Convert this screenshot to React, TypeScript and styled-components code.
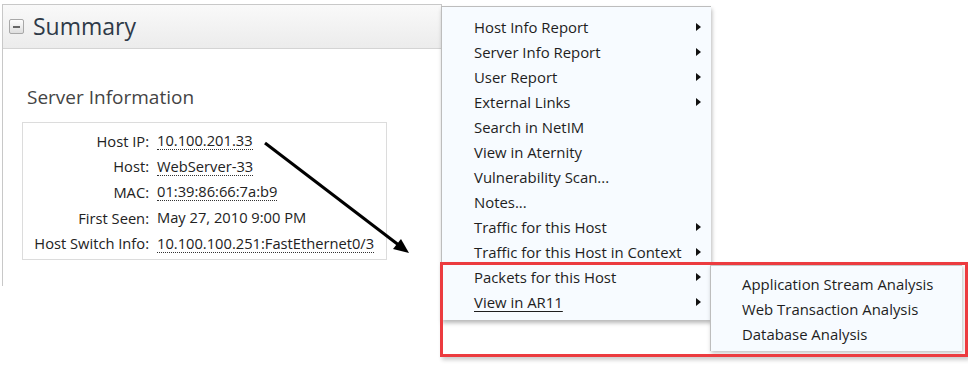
import * as React from 'react';
import styled, { createGlobalStyle } from 'styled-components';

const Global = createGlobalStyle`
  html, body {
    margin: 0;
    padding: 0;
    background: #ffffff;
  }
  body {
    font-family: "Open Sans", "Noto Sans", sans-serif;
    color: #222;
  }
`;

const Page = styled.div`
  position: relative;
  width: 968px;
  height: 383px;
  overflow: hidden;
  padding: 4px 0 0 2px;
  box-sizing: border-box;
`;

const Panel = styled.section`
  width: 440px;
  height: 282px;
  border: 1px solid #c8c8c8;
  border-bottom: none;
  box-sizing: border-box;
  display: flex;
  flex-direction: column;
`;

const PanelHeader = styled.div`
  height: 43px;
  display: flex;
  align-items: center;
  gap: 9px;
  padding-left: 6px;
  background: linear-gradient(#f9f9f9, #ececec);
  border-bottom: 1px solid #d4d4d4;
`;

const Toggle = styled.span`
  width: 13px;
  height: 13px;
  border: 1px solid #a8a8a8;
  border-radius: 2px;
  background: linear-gradient(#fdfdfd, #dedede);
  display: flex;
  align-items: center;
  justify-content: center;

  &::before {
    content: "";
    width: 7px;
    height: 2px;
    background: #666;
  }
`;

const PanelTitle = styled.h2`
  margin: 0;
  font-size: 23px;
  font-weight: 400;
  color: #2f3a48;
  line-height: 1;
`;

const PanelBody = styled.div`
  padding: 35px 0 0 19px;
`;

const SectionTitle = styled.h3`
  margin: 0 0 12px 5px;
  font-size: 19px;
  font-weight: 400;
  color: #444;
`;

const InfoBox = styled.div`
  width: 365px;
  box-sizing: border-box;
  border: 1px solid #dcdcdc;
  padding: 5px 0 3px;
  display: grid;
  grid-template-columns: 126px 1fr;
  column-gap: 8px;
  grid-auto-rows: 25.6px;
  align-items: center;
  font-size: 14.7px;
`;

const Label = styled.span`
  text-align: right;
  color: #222;
`;

const Value = styled.span<{ $link?: boolean }>`
  justify-self: start;
  color: #222;
  line-height: 18px;
  border-bottom: ${(p) => (p.$link ? '1px dotted #333' : '1px solid transparent')};
`;

const Menu = styled.div`
  position: absolute;
  left: 441px;
  top: 6px;
  width: 270px;
  padding: 7px 0 6px;
  background: #f7fbff;
  border-top: 1px solid #bdbdbd;
  border-left: 1px solid #bdbdbd;
  box-shadow: 1px 3px 4px rgba(0, 0, 0, 0.28);
  box-sizing: border-box;
`;

const MenuItem = styled.div<{ $underline?: boolean }>`
  height: 25px;
  display: flex;
  align-items: center;
  justify-content: space-between;
  padding: 0 10px 0 32px;
  font-size: 14.9px;
  color: #1e1e1e;
  white-space: nowrap;

  span {
    text-decoration: ${(p) => (p.$underline ? 'underline' : 'none')};
    text-underline-offset: 3px;
  }
`;

const Caret = styled.i`
  width: 0;
  height: 0;
  border-top: 4px solid transparent;
  border-bottom: 4px solid transparent;
  border-left: 5px solid #111;
`;

const SubMenu = styled.div`
  position: absolute;
  left: 710px;
  top: 265px;
  width: 252px;
  height: 86px;
  padding-top: 5px;
  background: #f7fbff;
  border-left: 1px solid #bdbdbd;
  border-top: 1px solid #c8c8c8;
  box-shadow: 1px 2px 4px rgba(0, 0, 0, 0.25);
  box-sizing: border-box;
`;

const SubItem = styled.div`
  height: 25px;
  display: flex;
  align-items: center;
  padding-left: 31px;
  font-size: 14.9px;
  color: #1e1e1e;
  white-space: nowrap;
`;

const Highlight = styled.div`
  position: absolute;
  left: 440px;
  top: 262px;
  width: 528px;
  height: 95px;
  border: 3px solid #ec3b3f;
  box-sizing: border-box;
  pointer-events: none;
  box-shadow: 2px 3px 4px rgba(0, 0, 0, 0.2);
`;

const Arrow = styled.svg`
  position: absolute;
  left: 0;
  top: 0;
  pointer-events: none;
`;

const info: [string, string, boolean][] = [
  ['Host IP:', '10.100.201.33', true],
  ['Host:', 'WebServer-33', true],
  ['MAC:', '01:39:86:66:7a:b9', true],
  ['First Seen:', 'May 27, 2010 9:00 PM', false],
  ['Host Switch Info:', '10.100.100.251:FastEthernet0/3', true],
];

const menu: { label: string; sub?: boolean; underline?: boolean }[] = [
  { label: 'Host Info Report', sub: true },
  { label: 'Server Info Report', sub: true },
  { label: 'User Report', sub: true },
  { label: 'External Links', sub: true },
  { label: 'Search in NetIM' },
  { label: 'View in Aternity' },
  { label: 'Vulnerability Scan...' },
  { label: 'Notes...' },
  { label: 'Traffic for this Host', sub: true },
  { label: 'Traffic for this Host in Context', sub: true },
  { label: 'Packets for this Host', sub: true },
  { label: 'View in AR11', sub: true, underline: true },
];

const subMenu = ['Application Stream Analysis', 'Web Transaction Analysis', 'Database Analysis'];

export default function App() {
  return (
    <>
      <Global />
      <Page>
        <Panel>
          <PanelHeader>
            <Toggle />
            <PanelTitle>Summary</PanelTitle>
          </PanelHeader>
          <PanelBody>
            <SectionTitle>Server Information</SectionTitle>
            <InfoBox>
              {info.map(([l, v, link]) => (
                <React.Fragment key={l}>
                  <Label>{l}</Label>
                  <Value $link={link}>{v}</Value>
                </React.Fragment>
              ))}
            </InfoBox>
          </PanelBody>
        </Panel>

        <Menu>
          {menu.map((m) => (
            <MenuItem key={m.label} $underline={m.underline}>
              <span>{m.label}</span>
              {m.sub && <Caret />}
            </MenuItem>
          ))}
        </Menu>

        <SubMenu>
          {subMenu.map((s) => (
            <SubItem key={s}>{s}</SubItem>
          ))}
        </SubMenu>

        <Highlight />

        <Arrow width="968" height="383" viewBox="0 0 968 383">
          <line x1="265" y1="143" x2="400" y2="246" stroke="#000" strokeWidth="3" />
          <polygon points="409,253 393,249 401,239" fill="#000" />
        </Arrow>
      </Page>
    </>
  );
}
